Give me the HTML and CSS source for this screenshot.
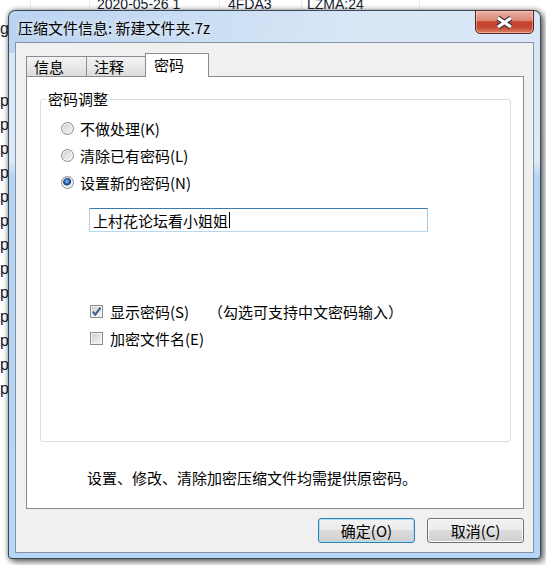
FILE: index.html
```html
<!DOCTYPE html>
<html lang="zh-CN">
<head>
  <meta charset="UTF-8">
  <title>压缩文件信息: 新建文件夹.7z</title>
  <link rel="stylesheet" href="styles.css">
</head>
<body>

  <!-- Main window file list, mostly covered by the dialog -->
  <div class="backdrop">
    <div class="bg-head">
      <span class="bg-col col-name"></span>
      <span class="bg-col col-size"></span>
      <span class="bg-col col-date">2020-05-26 1</span>
      <span class="bg-col col-crc">4FDA3</span>
      <span class="bg-col col-method">LZMA:24</span>
      <span class="bg-col col-rest"></span>
    </div>
    <div class="bg-list">
      <div class="bg-row">g</div>
      <div class="bg-row"></div>
      <div class="bg-row"></div>
      <div class="bg-row">p</div>
      <div class="bg-row">p</div>
      <div class="bg-row">p</div>
      <div class="bg-row">p</div>
      <div class="bg-row">p</div>
      <div class="bg-row">p</div>
      <div class="bg-row">p</div>
      <div class="bg-row">p</div>
      <div class="bg-row">p</div>
      <div class="bg-row">p</div>
      <div class="bg-row">p</div>
      <div class="bg-row">p</div>
      <div class="bg-row">p</div>
    </div>
  </div>

  <!-- Archive info dialog -->
  <div class="dialog">
    <div class="titlebar">
      <span class="title">压缩文件信息: 新建文件夹.7z</span>
      <div class="close-btn">
        <svg width="19" height="15" viewBox="0 0 19 15">
          <path d="M3 3 L16 12 M16 3 L3 12" stroke="#3c3c3c" stroke-width="5.5" fill="none"/>
          <path d="M3 3 L16 12 M16 3 L3 12" stroke="#ffffff" stroke-width="3" fill="none"/>
        </svg>
      </div>
    </div>

    <div class="client">
      <div class="tabs">
        <div class="tab">信息</div>
        <div class="tab">注释</div>
        <div class="tab active">密码</div>
      </div>

      <div class="panel">
        <fieldset class="group">
          <legend>密码调整</legend>
          <div class="opt"><span class="radio"></span>不做处理(K)</div>
          <div class="opt"><span class="radio"></span>清除已有密码(L)</div>
          <div class="opt"><span class="radio on"></span>设置新的密码(N)</div>

          <div class="textbox">上村花论坛看小姐姐<span class="caret"></span></div>

          <div class="opt check-row first">
            <span class="check">
              <svg width="11" height="11" viewBox="0 0 11 11">
                <path d="M1.8 5.6 L4.3 8.6 L9.4 1.6" stroke="#3f5a8f" stroke-width="2" fill="none"/>
              </svg>
            </span>
            显示密码(S)<span class="hint">（勾选可支持中文密码输入）</span>
          </div>
          <div class="opt check-row"><span class="check"></span>加密文件名(E)</div>
        </fieldset>

        <p class="note">设置、修改、清除加密压缩文件均需提供原密码。</p>
      </div>

      <div class="actions">
        <button class="btn default">确定(O)</button>
        <button class="btn">取消(C)</button>
      </div>
    </div>
  </div>

</body>
</html>
```

FILE: styles.css
```css
* {
  box-sizing: border-box;
}

body {
  margin: 0;
  width: 546px;
  height: 565px;
  position: relative;
  overflow: hidden;
  background: #fff;
  font-family: "Noto Sans CJK SC", sans-serif;
}

/* Main window behind the dialog */
.backdrop {
  position: absolute;
  top: 0;
  left: 0;
  right: 0;
  bottom: 0;
  font-family: "Liberation Sans", Arial, sans-serif;
  color: #141c30;
}

.bg-head {
  display: flex;
  height: 18px;
  margin-top: -5px;
  font-size: 14px;
  line-height: 18px;
}

.bg-col {
  border-right: 1px solid #ececec;
  white-space: nowrap;
  overflow: hidden;
}

.col-name { width: 31px; }
.col-size { width: 59px; }
.col-date { width: 130px; padding-left: 7px; }
.col-crc { width: 82px; padding-left: 8px; }
.col-method { width: 118px; padding-left: 5px; }
.col-rest { flex: 1; border-right: none; }

.bg-list {
  margin-top: 4px;
  font-size: 16px;
}

.bg-row {
  height: 24px;
  line-height: 24px;
}

/* Dialog frame */
.dialog {
  position: absolute;
  left: 8px;
  top: 10px;
  width: 533px;
  height: 549px;
  border: 1px solid rgba(35, 45, 60, 0.85);
  border-radius: 7px 7px 4px 4px;
  padding: 0 6px 5px;
  display: flex;
  flex-direction: column;
  background:
    linear-gradient(to right, rgba(160, 195, 235, 0.55), rgba(255, 255, 255, 0) 65%) top / 100% 42px no-repeat,
    linear-gradient(#d8e6f6 0, #dde9f6 150px, #b4d4f4 166px, #b7d6f5 100%);
  box-shadow: 0 0 5px rgba(0, 0, 0, 0.4), 3px 3px 7px rgba(0, 0, 0, 0.55);
}

.titlebar {
  height: 31px;
  display: flex;
  align-items: flex-start;
}

.title {
  padding: 7px 0 0 3px;
  font-size: 15px;
  line-height: 20px;
  color: #000;
  text-shadow: 0 0 6px rgba(255, 255, 255, 0.9);
}

.close-btn {
  margin-left: auto;
  margin-top: -1px;
  width: 59px;
  height: 24px;
  border: 1px solid #5a2720;
  border-radius: 0 0 5px 5px;
  background: linear-gradient(#eab0a2 0, #de8a78 42%, #c6432d 50%, #c44a34 75%, #dc8467 100%);
  box-shadow: inset 0 0 0 1px rgba(255, 255, 255, 0.35);
  display: flex;
  align-items: center;
  justify-content: center;
}

/* Client area */
.client {
  flex: 1;
  display: flex;
  flex-direction: column;
  background: #f0f0f0;
  border: 1px solid #8393a8;
  padding: 10px 9px 9px 10px;
}

.tabs {
  display: flex;
  align-items: flex-end;
  height: 23px;
  position: relative;
  z-index: 1;
}

.tab {
  width: 61px;
  height: 20px;
  padding-left: 7px;
  border: 1px solid #898c95;
  border-bottom: none;
  background: linear-gradient(#f3f3f3, #e9e9e9 50%, #dcdcdc);
  font-size: 15px;
  line-height: 19px;
  color: #000;
}

.tab + .tab {
  margin-left: -1px;
}

.tab.active {
  width: 64px;
  height: 24px;
  margin-left: -2px;
  margin-bottom: -1px;
  padding-left: 8px;
  background: #fff;
  line-height: 22px;
}

.panel {
  flex: 1;
  display: flex;
  flex-direction: column;
  background: #fff;
  border: 1px solid #898c95;
  padding: 12px 12px 20px 13px;
}

.group {
  flex: 1;
  margin: 0;
  padding: 6px 0 0;
  min-width: 0;
  border: 1px solid #d5dfe5;
  border-radius: 3px;
}

.group legend {
  margin-left: 5px;
  padding: 0 2px;
  font-size: 15px;
  line-height: 20px;
  color: #000;
}

.opt {
  display: flex;
  align-items: center;
  gap: 6px;
  height: 27px;
  padding-left: 20px;
  font-size: 15px;
  color: #000;
  white-space: nowrap;
}

.radio {
  width: 13px;
  height: 13px;
  border-radius: 50%;
  border: 1px solid #8c8c8c;
  background: linear-gradient(135deg, #cfcfcf, #f8f8f8);
  box-shadow: inset 0 0 0 1px #f2f2f2;
}

.radio.on {
  background:
    radial-gradient(circle at 45% 40%, #a9d6f7 0, #3f86d0 1.6px, #1a4f94 3px, #143c6e 3.8px, rgba(20, 60, 110, 0) 4.3px),
    linear-gradient(135deg, #cfcfcf, #f8f8f8);
}

.textbox {
  display: flex;
  align-items: center;
  width: 339px;
  height: 24px;
  margin: 12px 0 0 48px;
  padding-left: 3px;
  border: 1px solid;
  border-color: #3d7bad #a4c9e3 #b7d9ed #b5cfe7;
  background: #fff;
  font-size: 15px;
  color: #000;
}

.caret {
  width: 1px;
  height: 16px;
  margin-left: 1px;
  background: #000;
}

.check-row {
  gap: 7px;
  padding-left: 49px;
}

.check-row.first {
  margin-top: 66px;
}

.check {
  width: 13px;
  height: 13px;
  border: 1px solid #8c8c8c;
  background: linear-gradient(135deg, #cdcdcd, #f8f8f8);
  box-shadow: inset 0 0 0 1px #f4f4f4;
  display: flex;
  align-items: center;
  justify-content: center;
}

.hint {
  margin-left: 12px;
}

.note {
  margin: 26px 0 0 47px;
  font-size: 15px;
  line-height: 20px;
  color: #000;
}

/* Bottom buttons */
.actions {
  display: flex;
  justify-content: flex-end;
  gap: 12px;
  margin-top: 9px;
}

.btn {
  width: 97px;
  height: 25px;
  padding: 0;
  border: 1px solid #707070;
  border-radius: 3px;
  background: linear-gradient(#f2f2f2 0, #ebebeb 50%, #dddddd 50%, #cfcfcf 100%);
  box-shadow: inset 0 0 0 1px #fbfbfb;
  font-family: "Noto Sans CJK SC", sans-serif;
  font-size: 15px;
  line-height: 21px;
  color: #000;
}

.btn.default {
  border-color: #3c7fb1;
  box-shadow: inset 0 0 0 1px #a8e0f8;
}
```
